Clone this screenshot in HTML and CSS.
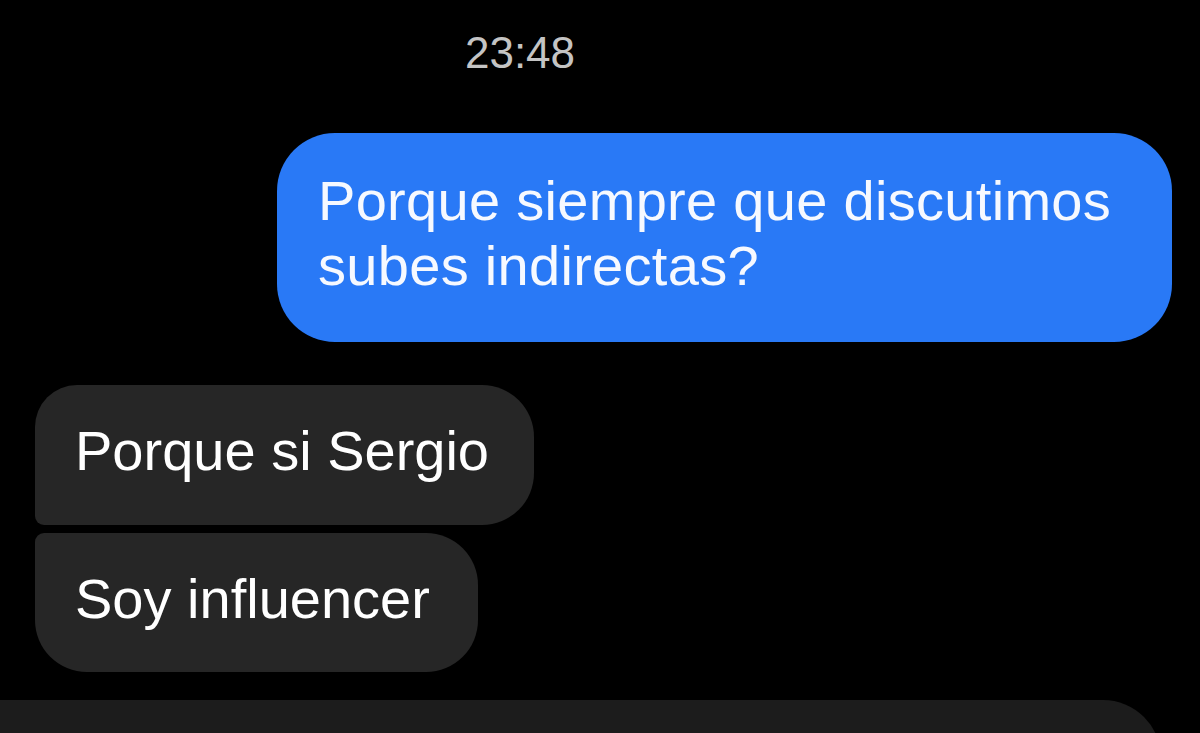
FILE: index.html
```html
<!DOCTYPE html>
<html lang="es">
<head>
<meta charset="utf-8">
<title>Chat</title>
<link rel="stylesheet" href="styles.css">
</head>
<body>
<main class="chat">
  <div class="time-row"><span class="time">23:48</span></div>
  <div class="row row-out">
    <div class="bubble bubble-out">Porque siempre que discutimos subes indirectas?</div>
  </div>
  <div class="group-in">
    <div class="bubble bubble-in bubble-first">Porque si Sergio</div>
    <div class="bubble bubble-in bubble-last">Soy influencer</div>
  </div>
  <div class="next-bubble"></div>
</main>
</body>
</html>
```

FILE: styles.css
```css
html, body {
  margin: 0;
  padding: 0;
  background: #000;
  height: 733px;
  overflow: hidden;
}
body {
  width: 1200px;
  font-family: "Liberation Sans", Arial, sans-serif;
}
.chat {
  display: flex;
  flex-direction: column;
  height: 733px;
  overflow: hidden;
}
.time-row {
  width: 1040px;
  display: flex;
  justify-content: center;
  padding-top: 27px;
}
.time {
  font-size: 44px;
  line-height: 52px;
  color: #c4c4c4;
}
.row-out {
  display: flex;
  justify-content: flex-end;
  padding-right: 28px;
  margin-top: 54px;
}
.bubble {
  font-size: 56px;
  line-height: 65px;
  box-sizing: border-box;
}
.bubble-out {
  width: 895px;
  background: #2979f6;
  color: #f6f9ff;
  border-radius: 58px;
  padding: 35px 36px 44px 41px;
  letter-spacing: 0.3px;
}
.group-in {
  display: flex;
  flex-direction: column;
  align-items: flex-start;
  gap: 8px;
  margin-top: 43px;
  padding-left: 35px;
}
.bubble-in {
  background: #262626;
  color: #fff;
  padding: 33px 45px 42px 40px;
}
.bubble-first {
  border-radius: 42px 52px 52px 9px;
}
.bubble-last {
  padding-bottom: 41px;
  padding-right: 48px;
  border-radius: 9px 52px 52px 52px;
}
.next-bubble {
  flex: none;
  margin-top: 28px;
  margin-left: -100px;
  width: 1261px;
  height: 140px;
  background: #1c1c1c;
  border-radius: 58px;
}
```
